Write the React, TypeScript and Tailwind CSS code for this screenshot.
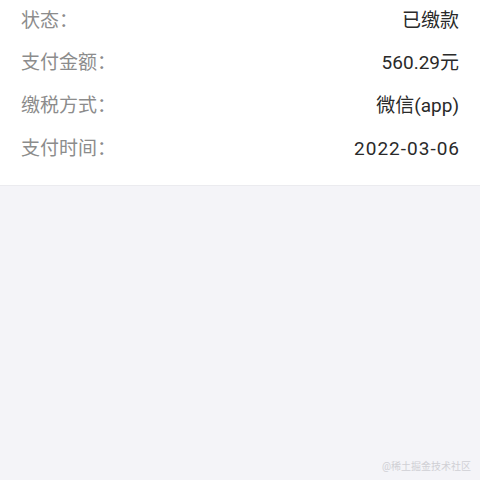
import React from 'react';

const rows = [
    { label: '状态：', value: '已缴款', tight: false },
    { label: '支付金额：', value: '560.29元', tight: false },
    { label: '缴税方式：', value: '微信(app)', tight: false },
    { label: '支付时间：', value: '2022-03-06', tight: true },
];

export default function App() {
    return (
        <div
            className="w-[480px] h-[480px] bg-[#f4f4f8] flex flex-col relative overflow-hidden"
            style={{ fontFamily: "Roboto, 'Noto Sans CJK SC', sans-serif" }}
        >
            <div className="bg-white px-[21px] pb-[14px] border-b border-[#ebebef]">
                {rows.map((row, i) => (
                    <div
                        key={row.label}
                        className={`flex items-center justify-between text-[19px] ${i === 0 ? 'h-[42px]' : 'h-[43px]'}`}
                    >
                        <span className="text-[#8c8c8c]">{row.label}</span>
                        <span className={`text-[#2a2a2a] ${row.tight ? 'tracking-[1px] -mr-[1px]' : ''}`}>{row.value}</span>
                    </div>
                ))}
            </div>
            <div className="absolute right-[9px] bottom-[6px] text-[10px] text-[#d0d0d5]">
                @稀土掘金技术社区
            </div>
        </div>
    );
}
